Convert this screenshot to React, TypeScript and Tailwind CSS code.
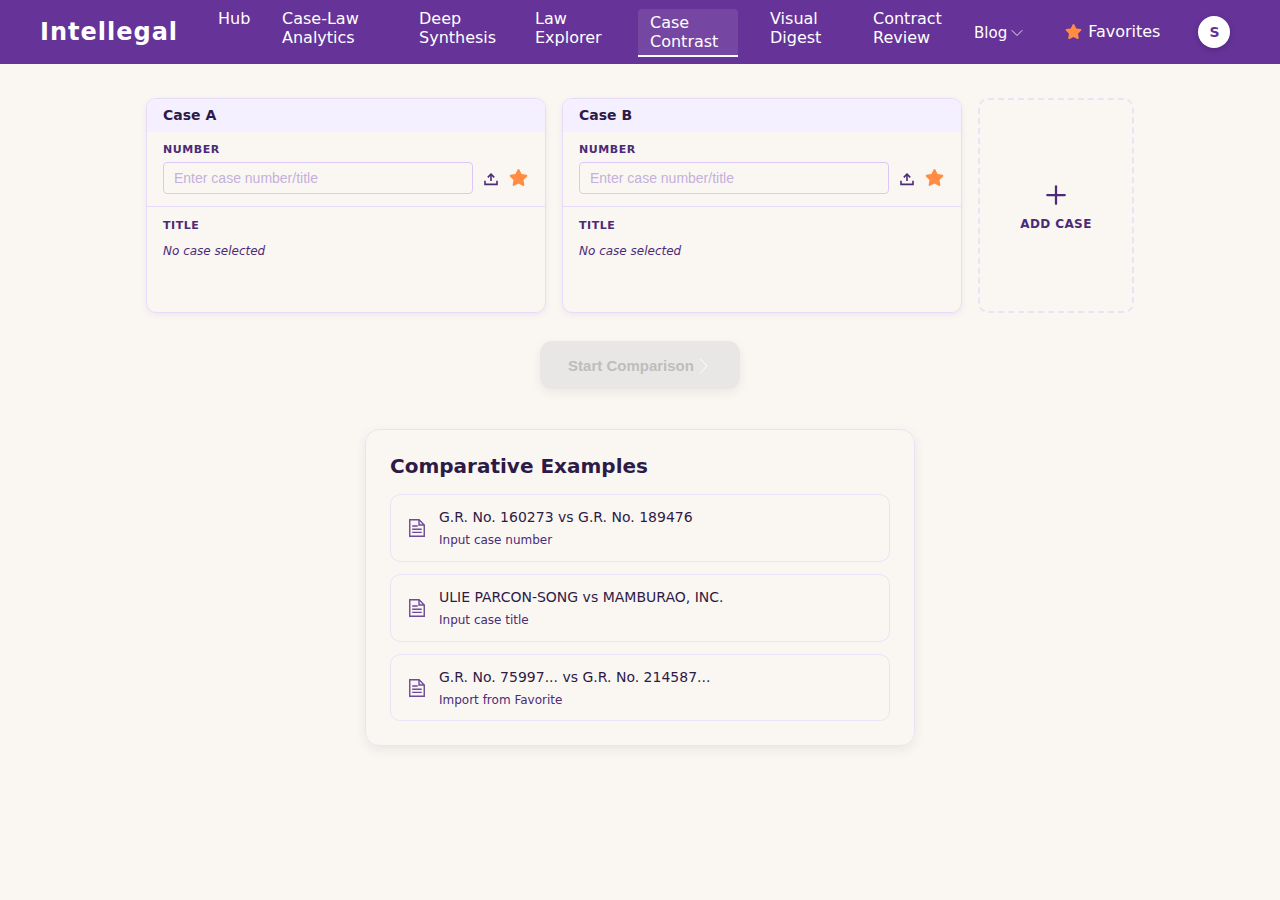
import { ChevronDown, Plus } from 'lucide-react';
import { FaStar } from 'react-icons/fa';

const sans = 'font-["DejaVu_Sans",sans-serif]';

const navItems = [
  { first: 'Hub', width: 'w-[56px]' },
  { first: 'Case-Law', second: 'Analytics', width: 'w-[129px]' },
  { first: 'Deep', second: 'Synthesis', width: 'w-[108px]' },
  { first: 'Law', second: 'Explorer', width: 'w-[107px]' },
  { first: 'Case', second: 'Contrast', width: 'w-[100px]', active: true },
  { first: 'Visual', second: 'Digest', width: 'w-[95px] ml-[12px]' },
  { first: 'Contract', second: 'Review', width: 'w-[93px]' },
];

const examples = [
  { title: 'G.R. No. 160273 vs G.R. No. 189476', hint: 'Input case number', box: 'h-[68px]', text: 'pb-[2px]' },
  { title: 'ULIE PARCON-SONG vs MAMBURAO, INC.', hint: 'Input case title', box: 'h-[68px]', text: 'pb-[2px]' },
  { title: 'G.R. No. 75997... vs G.R. No. 214587...', hint: 'Import from Favorite', box: 'h-[67px]', text: '' },
];

function UploadIcon() {
  return (
    <svg className="block mt-[1px]" width="14" height="14" viewBox="0 0 14 14" fill="none" stroke="#4b2a78" strokeWidth="1.6" aria-hidden="true">
      <path d="M7 9V2.5" />
      <path d="M3.8 5.4 7 2.2l3.2 3.2" />
      <path d="M1 8.8v3.6h12V8.8" />
    </svg>
  );
}

function DocIcon() {
  return (
    <svg width="16" height="18" viewBox="0 0 16 18" fill="none" stroke="#6d4a9a" strokeWidth="1.4" aria-hidden="true">
      <path d="M.75.75H10L15.25 6v11.25H.75z" />
      <path d="M10 .75V6h5.25" />
      <path d="M3.2 7h5.5M3.2 10.2h9.5M3.2 13.4h9.5" />
    </svg>
  );
}

function CaseCard({ label }: { label: string }) {
  return (
    <div className="w-[400px] h-[215px] rounded-[10px] border border-[#e6dcfa] shadow-[0_2px_6px_rgba(102,51,153,0.08)] overflow-hidden">
      <div className="h-[33px] bg-[#f5f0ff] px-4 flex items-center text-[14px] font-bold text-[#2e1a47]">{label}</div>
      <div className="px-4 pt-[11px] h-[75px] border-b border-[#e6dcfa]">
        <div className="text-[11px] leading-[14px] font-bold tracking-[0.55px] text-[#4b2a78]">NUMBER</div>
        <div className="mt-[5px] flex items-center">
          <input
            placeholder="Enter case number/title"
            className='w-[310px] h-[32px] rounded-[4px] border border-[#dcc8f8] px-[10px] text-[14px] font-["Liberation_Sans",sans-serif] outline-none placeholder:text-[#c4b0dc]'
          />
          <span className="ml-[11px]"><UploadIcon /></span>
          <FaStar className="ml-[11px] -mt-[1px] text-[#ff8c42]" size={19} />
        </div>
      </div>
      <div className="px-4 pt-[12px]">
        <div className="text-[11px] leading-[14px] font-bold tracking-[0.55px] text-[#4b2a78]">TITLE</div>
        <div className="mt-[10px] text-[12px] leading-[16px] italic text-[#4b2a78]">No case selected</div>
      </div>
    </div>
  );
}

export default function App() {
  return (
    <div className={`min-h-[900px] bg-[#faf7f2] ${sans}`}>
      {/* Header */}
      <header className="h-[64px] bg-[#663399] flex items-start pl-[40px] text-white">
        <div className="mt-[16px] text-[24px] leading-[33px] font-bold tracking-[1px] w-[166px]">Intellegal</div>
        <nav className="flex items-start gap-2 text-[16px] leading-[19px]">
          {navItems.map((item) =>
            item.active ? (
              <div key={item.first} className={`${item.width} mt-[9px] h-[48px] px-3 pt-[4px] rounded-t-[4px] bg-white/10 border-b-2 border-white`}>
                <div>{item.first}</div>
                <div>{item.second}</div>
              </div>
            ) : (
              <div key={item.first} className={`${item.width} mt-[9px] px-3`}>
                <div>{item.first}</div>
                {item.second && <div>{item.second}</div>}
              </div>
            ),
          )}
        </nav>
        <div className="ml-[20px] mt-[23px] flex items-center text-[15px] leading-[18px]">
          Blog
          <ChevronDown size={20} strokeWidth={1} />
        </div>
        <div className="ml-[38px] mt-[22px] flex items-center text-[16px] leading-[19px]">
          <FaStar className="text-[#ff8c42] mr-[6px]" size={17} />
          Favorites
        </div>
        <div className="ml-[38px] mt-[16px] w-[32px] h-[32px] rounded-full bg-white text-[#663399] text-[14px] font-bold flex items-center justify-center shadow-[0_2px_6px_rgba(0,0,0,0.2)]">
          S
        </div>
      </header>

      {/* Case cards */}
      <main className="flex flex-col items-center">
        <div className="mt-[34px] flex gap-4">
          <CaseCard label="Case A" />
          <CaseCard label="Case B" />
          <div className="w-[156px] h-[215px] pt-[1px] rounded-[10px] border-2 border-dashed border-[#e9e3f7] flex flex-col items-center justify-center text-[#4b2a78]">
            <Plus size={30} strokeWidth={1.8} />
            <div className="mt-[6px] text-[12px] leading-[16px] font-bold tracking-[0.4px]">ADD CASE</div>
          </div>
        </div>

        <button
          disabled
          className='mt-[28px] w-[200px] h-[48px] pt-[2px] rounded-[12px] bg-[#e9e7e5] shadow-[0_4px_12px_rgba(0,0,0,0.06)] flex items-center justify-center font-["Liberation_Sans",sans-serif] text-[15px] font-bold text-[#bfbdbb]'
        >
          Start Comparison
          <svg width="18" height="18" viewBox="0 0 18 18" fill="none" stroke="#ffffff" strokeWidth="1" aria-hidden="true">
            <path d="M6 1.5 13 9 6 16.5" />
          </svg>
        </button>

        {/* Examples */}
        <section className="mt-[40px] w-[550px] h-[317px] rounded-[14px] border border-[#e9e3f7] shadow-[0_4px_12px_rgba(45,27,78,0.08)] px-[24px] pt-[22px]">
          <h2 className="text-[20px] leading-[28px] font-bold text-[#2e1a47]">Comparative Examples</h2>
          <div className="mt-[14px] flex flex-col gap-3">
            {examples.map((ex) => (
              <div key={ex.title} className={`${ex.box} rounded-[10px] border border-[#e9e3f7] flex items-center pl-[18px]`}>
                <DocIcon />
                <div className={`ml-[14px] ${ex.text}`}>
                  <div className="text-[14px] leading-[20px] text-[#2e1a47]">{ex.title}</div>
                  <div className="mt-[5px] text-[12px] leading-[16px] text-[#4b2a78]">{ex.hint}</div>
                </div>
              </div>
            ))}
          </div>
        </section>
      </main>
    </div>
  );
}
